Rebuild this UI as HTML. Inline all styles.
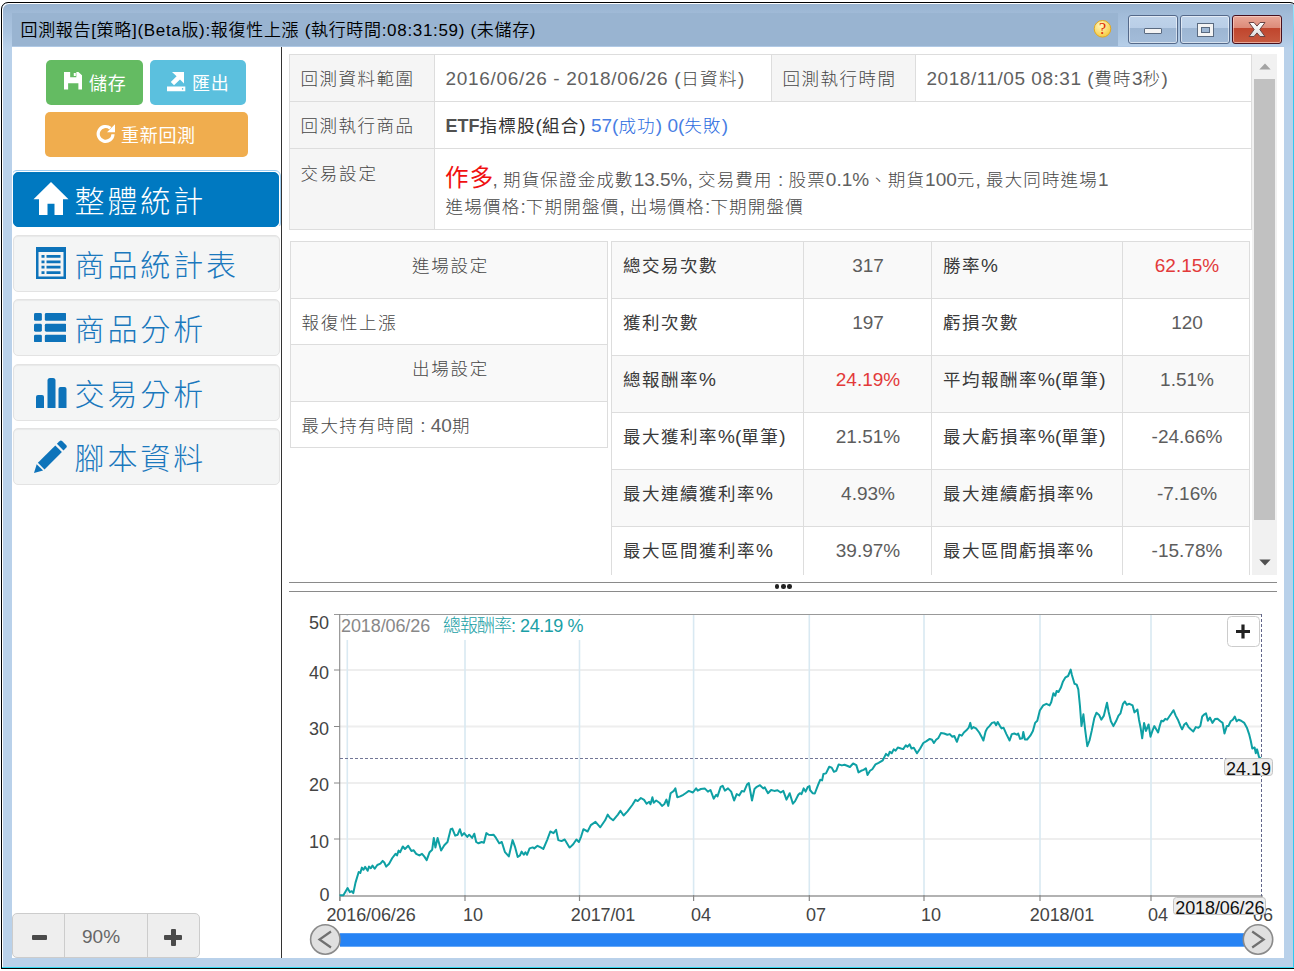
<!DOCTYPE html>
<html lang="zh-Hant">
<head>
<meta charset="utf-8">
<title>回測報告</title>
<style>
*{box-sizing:border-box;margin:0;padding:0}
html,body{width:1294px;height:971px;overflow:hidden;background:#fff}
body{position:relative;font-family:"Liberation Sans","Noto Sans CJK TC",sans-serif;color:#474747;font-size:18px;font-weight:300}
.abs{position:absolute}
#frame{left:1px;top:2px;width:1296px;height:967px;background:linear-gradient(#97b2cf 0,#a2bcd9 12px,#aac4e0 30px,#b9d1ea 46px,#b9d1ea 100%);border:1px solid #000;border-radius:7px 7px 0 0;box-shadow:inset 1px 1px 0 #fff}
#cyanr{left:1293px;top:5px;width:1px;height:963px;background:linear-gradient(#9fe6fa 0,#4fd0f4 40px,#30c8f0 80px)}
#cyanb{left:2px;top:967px;width:1292px;height:1px;background:#30d8f0}
#tpanel{left:12px;top:13px;width:1106px;height:33px;background:#99b4d1}
#tline{left:12px;top:46px;width:1272px;height:1px;background:#b0c9e5}
#title{left:20.5px;top:17px;height:28px;line-height:28px;font-size:17px;color:#000;white-space:nowrap;letter-spacing:.68px;font-weight:350}
#content{left:12px;top:47px;width:1272px;height:911px;background:#fff}
#vline{left:281px;top:47px;width:1px;height:911px;background:#333}
.wb{top:15px;height:29px;border:1px solid #54698a;border-radius:3px;background:linear-gradient(#bfd3ea 0,#b9cee7 45%,#9db6d3 46%,#a3bcd9 100%);box-shadow:inset 0 0 0 1px rgba(255,255,255,.55)}
.wb.close{border-color:#47101e;background:linear-gradient(#eaa898 0,#dc8a78 45%,#c0452d 46%,#c65a40 100%);box-shadow:inset 0 0 0 1px rgba(255,220,210,.6)}
.btn{color:#fff;border-radius:5px;font-size:18px;white-space:nowrap;font-weight:400}
.btn span{position:absolute;top:1.5px;line-height:45px;letter-spacing:.7px}
.menu{left:13px;width:267px;height:57px;background:#f4f5f5;border:1px solid #e3e3e3;border-radius:5px;color:#1a78bd;font-size:30px;white-space:nowrap;box-shadow:inset 0 1px 1px rgba(0,0,0,.05)}
.menu.active{background:#0079c1;border-color:#0079c1;color:#fff}
.menu span{position:absolute;left:60.5px;top:8px;line-height:44px;letter-spacing:2.9px}
.menu svg{position:absolute}
.t{position:absolute;white-space:nowrap;line-height:24px;height:24px;font-size:17.5px;letter-spacing:1px}
.t i{font-style:normal;font-size:19px;letter-spacing:0;line-height:0}
.t i{opacity:.86}
.b i{font-weight:400;font-size:19px;opacity:1}
.n{font-size:19px;letter-spacing:0;opacity:.88}
.cell{position:absolute;border:1px solid #ddd}
.g{background:#f9f9f9}
.g2{background:#f5f5f5}
.b{font-weight:400;color:#3a3a3a}
.c{text-align:center}
.red{color:#e02020}
</style>
</head>
<body>
<div id="frame" class="abs"></div>
<div id="cyanr" class="abs"></div>
<div id="cyanb" class="abs"></div>
<div class="abs" style="left:1px;top:968px;width:1293px;height:1px;background:#000"></div>
<div id="tpanel" class="abs"></div>
<div id="tline" class="abs"></div>
<div id="title" class="abs">回測報告[策略](Beta版):報復性上漲 (執行時間:08:31:59) (未儲存)</div>

<!-- help -->
<svg class="abs" style="left:1092px;top:19px" width="20" height="20" viewBox="0 0 20 20">
<defs><radialGradient id="hg" cx="40%" cy="30%" r="75%"><stop offset="0" stop-color="#fff8c0"/><stop offset="1" stop-color="#f6c83c"/></radialGradient></defs>
<circle cx="10.5" cy="9.8" r="8.3" fill="url(#hg)" stroke="#e2a820" stroke-width="1"/>
<text x="10.5" y="15" font-family="Liberation Serif,serif" font-size="16" fill="#e02800" text-anchor="middle">?</text>
</svg>
<!-- window buttons -->
<div class="abs wb" style="left:1128px;width:50px"><div class="abs" style="left:15px;top:12px;width:18px;height:6px;background:#f4f4f4;border:1px solid #5a6a80;border-radius:1px"></div></div>
<div class="abs wb" style="left:1180px;width:50px"><div class="abs" style="left:17px;top:7.5px;width:14.5px;height:12.5px;border:3.5px solid #f4f4f4;outline:1px solid #5a6a80;box-shadow:inset 0 0 0 1px #5a6a80"></div></div>
<div class="abs wb close" style="left:1232px;width:50px">
<svg class="abs" style="left:14px;top:5px" width="20" height="18" viewBox="0 0 20 18"><defs><linearGradient id="xg" x1="0" y1="0" x2="0" y2="1"><stop offset="0" stop-color="#fff"/><stop offset="1" stop-color="#dcdcdc"/></linearGradient></defs><path d="M2 1.500h5l3 3.600 3-3.600h5L12.800 8.500l5.200 7h-5l-3-3.600-3 3.600H2l5.200-7z" fill="url(#xg)" stroke="#6a4444" stroke-width="1" stroke-linejoin="round"/></svg>
</div>

<div id="content" class="abs"></div>
<div id="vline" class="abs"></div>

<!-- left buttons -->
<div class="abs btn" style="left:46px;top:60px;width:97px;height:45px;background:#64bb62">
<svg class="abs" style="left:17.500px;top:12px" width="18.500" height="17.500" viewBox="0 0 18 17" preserveAspectRatio="none"><path d="M0 0h14l4 3.5V17H14V11H4v6H0zM6 0v5h6V0zM9.5 1h2v3h-2z" fill="#fff" fill-rule="evenodd"/></svg>
<span style="left:43px">儲存</span></div>
<div class="abs btn" style="left:150px;top:60px;width:96px;height:45px;background:#5bc0de">
<svg class="abs" style="left:17px;top:11.800px" width="19" height="20" viewBox="0 0 19 20"><path d="M0 14.500h18.300v4.700H0zM5 0H17V11.500L13 7.600 7 13.200 3.800 10 9.600 4.300z" fill="#fff"/><circle cx="15.600" cy="16.900" r=".8" fill="#5bc0de"/></svg>
<span style="left:42px">匯出</span></div>
<div class="abs btn" style="left:45px;top:112px;width:203px;height:45px;background:#f0ad4e">
<svg class="abs" style="left:51px;top:12px" width="20" height="20" viewBox="0 0 20 20"><path d="M17 10.200a7.400 7.400 0 1 1-2.600-5.900" fill="none" stroke="#fff" stroke-width="3.200"/><path d="M11 8.200L19 .3v7.900z" fill="#fff"/></svg>
<span style="left:76px">重新回測</span></div>

<div class="abs" style="left:11px;top:170px;width:270px;height:59px;border:1px solid #9fcdf0;border-radius:6px;clip-path:inset(0 0 3px 2px)"></div>
<div class="abs menu active" style="top:172px;width:266px;height:55px">
<svg style="left:19px;top:9px" width="36" height="33.500" viewBox="0 0 36 34" preserveAspectRatio="none"><path d="M18 0L35.5 17.5H30V33.5H21.5V22H14.5V33.5H6V17.5H.5z" fill="#fff"/></svg>
<span style="top:7px">整體統計</span></div>
<div class="abs menu" style="top:235px">
<svg style="left:22px;top:10.500px" width="30" height="32" viewBox="0 0 30 32"><path d="M0 0h30v32H0zM2.500 5v24.500h25V5z M5.500 8h3v2.800h-3zM10.500 8h14v2.800h-14zM5.500 13.400h3v2.800h-3zM10.500 13.400h14v2.800h-14zM5.500 18.800h3v2.800h-3zM10.500 18.800h14v2.800h-14zM5.500 24.200h3v2.800h-3zM10.500 24.200h14v2.800h-14z" fill="#0d73ba" fill-rule="evenodd"/></svg>
<span>商品統計表</span></div>
<div class="abs menu" style="top:299px">
<svg style="left:19.500px;top:12.500px" width="32.500" height="29.500" viewBox="0 0 33 30" preserveAspectRatio="none"><g fill="#0d73ba"><rect x="0" y="0" width="8" height="8" rx="1.5"/><rect x="11" y="0" width="22" height="8" rx="1.5"/><rect x="0" y="11" width="8" height="8" rx="1.5"/><rect x="11" y="11" width="22" height="8" rx="1.5"/><rect x="0" y="22" width="8" height="8" rx="1.5"/><rect x="11" y="22" width="22" height="8" rx="1.5"/></g></svg>
<span>商品分析</span></div>
<div class="abs menu" style="top:363.5px">
<svg style="left:22px;top:13px" width="31" height="30" viewBox="0 0 31 30"><g fill="#0d73ba"><path d="M0 30V19a2 2 0 0 1 2-2h4a2 2 0 0 1 2 2v11z"/><path d="M11.5 30V2.500a2.500 2.500 0 0 1 2.500-2.500h3a2.500 2.500 0 0 1 2.500 2.500V30z"/><path d="M22.500 30V11a2 2 0 0 1 2-2h4a2 2 0 0 1 2 2v19z"/></g></svg>
<span>交易分析</span></div>
<div class="abs menu" style="top:428px">
<svg style="left:20px;top:11px" width="34" height="33" viewBox="0 0 34 33"><g fill="#0d73ba"><path d="M25.500 1.200a2 2 0 0 1 2.800 0l3.800 3.800a2 2 0 0 1 0 2.800l-2.600 2.600-6.600-6.600z"/><path d="M21.300 5.400l6.600 6.600L10.500 29.400l-6.600-6.600z"/><path d="M2.700 24.200l6.400 6.400L0 33z"/></g></svg>
<span>腳本資料</span></div>

<!-- zoom control -->
<div class="abs" style="left:12px;top:913px;width:188px;height:45px;background:#eee;border:1px solid #ccc;border-radius:5px"></div>
<div class="abs" style="left:64px;top:913px;width:1px;height:45px;background:#ccc"></div>
<div class="abs" style="left:147px;top:913px;width:1px;height:45px;background:#ccc"></div>
<div class="abs" style="left:32px;top:935px;width:15px;height:5px;background:#4a4a4a;border-radius:1px"></div>
<div class="abs" style="left:164px;top:935px;width:18px;height:5px;background:#4a4a4a;border-radius:1px"></div>
<div class="abs" style="left:170.5px;top:929px;width:5px;height:17px;background:#4a4a4a;border-radius:1px"></div>
<div class="t" style="left:82px;top:925px;font-size:19px;color:#666;letter-spacing:0">90%</div>

<!-- info table -->
<div class="cell g2" style="left:289px;top:54px;width:146px;height:48px"></div>
<div class="cell" style="left:434px;top:54px;width:338px;height:48px"></div>
<div class="cell g2" style="left:771px;top:54px;width:145px;height:48px"></div>
<div class="cell" style="left:915px;top:54px;width:337px;height:48px"></div>
<div class="cell g2" style="left:289px;top:101px;width:146px;height:48px"></div>
<div class="cell" style="left:434px;top:101px;width:818px;height:48px"></div>
<div class="cell g2" style="left:289px;top:148px;width:146px;height:82px"></div>
<div class="cell" style="left:434px;top:148px;width:818px;height:82px"></div>
<div class="t" id="a1" style="left:300.5px;top:67px;letter-spacing:1.5px">回測資料範圍</div>
<div class="t" id="a2" style="left:445.5px;top:67px;letter-spacing:1.4px"><i style="letter-spacing:.68px">2016/06/26 - 2018/06/26 (</i>日資料<i>)</i></div>
<div class="t" id="a3" style="left:782.5px;top:67px;letter-spacing:1.5px">回測執行時間</div>
<div class="t" id="a4" style="left:926.5px;top:67px;letter-spacing:1.4px"><i style="letter-spacing:.53px">2018/11/05 08:31 (</i>費時<i>3</i>秒<i>)</i></div>
<div class="t" id="a5" style="left:300.5px;top:114px;letter-spacing:1.5px">回測執行商品</div>
<div class="t" id="a6" style="left:445.5px;top:114px;letter-spacing:1.2px"><span class="b" style="color:#333"><i style="font-weight:700;font-size:18px;opacity:.85">ETF</i>指標股<i>(</i>組合<i>)</i></span><i> </i><span style="color:#2a6ae0"><i>57(</i>成功<i>) 0(</i>失敗<i>)</i></span></div>
<div class="t" id="a7" style="left:300.5px;top:161.5px;letter-spacing:1.8px">交易設定</div>
<div class="t b" id="a8b" style="left:445px;top:164px;line-height:28px;height:28px;color:#f01010;font-size:23.5px;letter-spacing:1.2px">作多</div>
<div class="t" id="a8" style="left:492.5px;top:168px;letter-spacing:1.15px"><i>, </i>期貨保證金成數<i>13.5%, </i>交易費用<i> : </i>股票<i>0.1%</i>、期貨<i>100</i>元<i>, </i>最大同時進場<i>1</i></div>
<div class="t" id="a9" style="left:445.5px;top:195px;letter-spacing:1.25px">進場價格<i>:</i>下期開盤價<i>, </i>出場價格<i>:</i>下期開盤價</div>

<!-- settings table -->
<div class="cell g" style="left:290px;top:241px;width:318px;height:58px"></div>
<div class="cell" style="left:290px;top:298px;width:318px;height:47px"></div>
<div class="cell g" style="left:290px;top:344px;width:318px;height:58px"></div>
<div class="cell" style="left:290px;top:401px;width:318px;height:47px"></div>
<div class="t c" style="left:291px;width:319px;top:254px;letter-spacing:1.8px">進場設定</div>
<div class="t" style="left:301.5px;top:311px;letter-spacing:1.7px">報復性上漲</div>
<div class="t c" style="left:291px;width:319px;top:356.5px;letter-spacing:1.8px">出場設定</div>
<div class="t" style="left:301.5px;top:414px;letter-spacing:1.4px">最大持有時間<i> : 40</i>期</div>

<!-- stats table -->
<div class="cell g" style="left:611px;top:241px;width:193px;height:58px"></div>
<div class="cell g" style="left:803px;top:241px;width:129px;height:58px"></div>
<div class="cell g" style="left:931px;top:241px;width:192px;height:58px"></div>
<div class="cell g" style="left:1122px;top:241px;width:128px;height:58px"></div>
<div class="t b" style="left:623px;top:254px;letter-spacing:1.5px">總交易次數</div>
<div class="t c n " style="left:803.5px;width:129px;top:254px">317</div>
<div class="t b" style="left:943px;top:254px;letter-spacing:1.5px">勝率<i>%</i></div>
<div class="t c n red" style="left:1122.5px;width:129px;top:254px">62.15%</div>
<div class="cell" style="left:611px;top:298px;width:193px;height:58px"></div>
<div class="cell" style="left:803px;top:298px;width:129px;height:58px"></div>
<div class="cell" style="left:931px;top:298px;width:192px;height:58px"></div>
<div class="cell" style="left:1122px;top:298px;width:128px;height:58px"></div>
<div class="t b" style="left:623px;top:311px;letter-spacing:1.5px">獲利次數</div>
<div class="t c n " style="left:803.5px;width:129px;top:311px">197</div>
<div class="t b" style="left:943px;top:311px;letter-spacing:1.5px">虧損次數</div>
<div class="t c n " style="left:1122.5px;width:129px;top:311px">120</div>
<div class="cell g" style="left:611px;top:355px;width:193px;height:58px"></div>
<div class="cell g" style="left:803px;top:355px;width:129px;height:58px"></div>
<div class="cell g" style="left:931px;top:355px;width:192px;height:58px"></div>
<div class="cell g" style="left:1122px;top:355px;width:128px;height:58px"></div>
<div class="t b" style="left:623px;top:368px;letter-spacing:1.5px">總報酬率<i>%</i></div>
<div class="t c n red" style="left:803.5px;width:129px;top:368px">24.19%</div>
<div class="t b" style="left:943px;top:368px;letter-spacing:1.5px">平均報酬率<i>%(</i>單筆<i>)</i></div>
<div class="t c n " style="left:1122.5px;width:129px;top:368px">1.51%</div>
<div class="cell" style="left:611px;top:412px;width:193px;height:58px"></div>
<div class="cell" style="left:803px;top:412px;width:129px;height:58px"></div>
<div class="cell" style="left:931px;top:412px;width:192px;height:58px"></div>
<div class="cell" style="left:1122px;top:412px;width:128px;height:58px"></div>
<div class="t b" style="left:623px;top:425px;letter-spacing:1.5px">最大獲利率<i>%(</i>單筆<i>)</i></div>
<div class="t c n " style="left:803.5px;width:129px;top:425px">21.51%</div>
<div class="t b" style="left:943px;top:425px;letter-spacing:1.5px">最大虧損率<i>%(</i>單筆<i>)</i></div>
<div class="t c n " style="left:1122.5px;width:129px;top:425px">-24.66%</div>
<div class="cell g" style="left:611px;top:469px;width:193px;height:58px"></div>
<div class="cell g" style="left:803px;top:469px;width:129px;height:58px"></div>
<div class="cell g" style="left:931px;top:469px;width:192px;height:58px"></div>
<div class="cell g" style="left:1122px;top:469px;width:128px;height:58px"></div>
<div class="t b" style="left:623px;top:482px;letter-spacing:1.5px">最大連續獲利率<i>%</i></div>
<div class="t c n " style="left:803.5px;width:129px;top:482px">4.93%</div>
<div class="t b" style="left:943px;top:482px;letter-spacing:1.5px">最大連續虧損率<i>%</i></div>
<div class="t c n " style="left:1122.5px;width:129px;top:482px">-7.16%</div>
<div class="cell" style="left:611px;top:526px;width:193px;height:49px;border-bottom:0"></div>
<div class="cell" style="left:803px;top:526px;width:129px;height:49px;border-bottom:0"></div>
<div class="cell" style="left:931px;top:526px;width:192px;height:49px;border-bottom:0"></div>
<div class="cell" style="left:1122px;top:526px;width:128px;height:49px;border-bottom:0"></div>
<div class="t b" style="left:623px;top:539px;letter-spacing:1.5px">最大區間獲利率<i>%</i></div>
<div class="t c n " style="left:803.5px;width:129px;top:539px">39.97%</div>
<div class="t b" style="left:943px;top:539px;letter-spacing:1.5px">最大區間虧損率<i>%</i></div>
<div class="t c n " style="left:1122.5px;width:129px;top:539px">-15.78%</div>

<!-- scrollbar -->
<div class="abs" style="left:1252px;top:54px;width:25px;height:521px;background:#f1f1f1"></div>
<div class="abs" style="left:1254px;top:79px;width:21px;height:441px;background:#c1c1c1"></div>
<svg class="abs" style="left:1258.500px;top:62.800px" width="12" height="7" viewBox="0 0 13 8"><path d="M0 7.500L6.500 .5 13 7.500z" fill="#a3a3a3"/></svg>
<svg class="abs" style="left:1258.500px;top:558.500px" width="12" height="7" viewBox="0 0 13 8"><path d="M0 .5L6.500 7.500 13 .5z" fill="#505050"/></svg>

<!-- splitter -->
<div class="abs" style="left:289px;top:582px;width:988px;height:1px;background:#8a8a8a"></div>
<div class="abs" style="left:289px;top:591px;width:988px;height:1px;background:#8a8a8a"></div>
<div class="abs" style="left:774.700px;top:584.200px;width:4.600px;height:4.600px;border-radius:2.300px;background:#222"></div>
<div class="abs" style="left:781px;top:584.200px;width:4.600px;height:4.600px;border-radius:2.300px;background:#222"></div>
<div class="abs" style="left:787.300px;top:584.200px;width:4.600px;height:4.600px;border-radius:2.300px;background:#222"></div>

<!-- chart -->
<svg class="abs" style="left:282px;top:596px" width="1002" height="362" viewBox="282 596 1002 362" font-family="Liberation Sans, sans-serif">
<g stroke="#eeeeee" stroke-width="2">
<line x1="340" x2="1262" y1="670" y2="670"/><line x1="340" x2="1262" y1="726.500" y2="726.500"/><line x1="340" x2="1262" y1="783" y2="783"/><line x1="340" x2="1262" y1="839" y2="839"/>
</g>
<g stroke="#d9e9f2" stroke-width="1.600">
<line x1="347.3" x2="347.3" y1="615" y2="895"/>
<line x1="465" x2="465" y1="615" y2="895"/>
<line x1="579.5" x2="579.5" y1="615" y2="895"/>
<line x1="693.6" x2="693.6" y1="615" y2="895"/>
<line x1="809.3" x2="809.3" y1="615" y2="895"/>
<line x1="924" x2="924" y1="615" y2="895"/>
<line x1="1040" x2="1040" y1="615" y2="895"/>
<line x1="1151" x2="1151" y1="615" y2="895"/>
</g>
<rect x="341" y="616" width="250" height="24" fill="#fff"/>
<line x1="334" x2="1262" y1="614.500" y2="614.500" stroke="#999" stroke-width="1"/>
<line x1="339.700" x2="339.700" y1="614" y2="901" stroke="#8a8a8a" stroke-width="1.100"/>
<line x1="339" x2="1262" y1="895.900" y2="895.900" stroke="#b2b2b2" stroke-width="2"/>
<g stroke="#888" stroke-width="1">
<line x1="334" x2="340" y1="670" y2="670"/><line x1="334" x2="340" y1="726.500" y2="726.500"/><line x1="334" x2="340" y1="783" y2="783"/><line x1="334" x2="340" y1="839" y2="839"/>
</g>
<g stroke="#888" stroke-width="1.200">
<line x1="340" x2="340" y1="895" y2="901"/>
<line x1="465" x2="465" y1="895" y2="901"/>
<line x1="579.5" x2="579.5" y1="895" y2="901"/>
<line x1="693.6" x2="693.6" y1="895" y2="901"/>
<line x1="809.3" x2="809.3" y1="895" y2="901"/>
<line x1="924" x2="924" y1="895" y2="901"/>
<line x1="1040" x2="1040" y1="895" y2="901"/>
<line x1="1151" x2="1151" y1="895" y2="901"/>
<line x1="1262" x2="1262" y1="895" y2="901"/>
</g>
<line x1="340" x2="1262" y1="758.500" y2="758.500" stroke="#62668a" stroke-width=".900" stroke-dasharray="3 2"/>
<line x1="1261.500" x2="1261.500" y1="614" y2="896" stroke="#62668a" stroke-width="1" stroke-dasharray="3 2"/>
<polyline fill="none" stroke="#0ea0a4" stroke-width="2" stroke-linejoin="round" points="339.6,895.3 343.4,895.3 347.6,888.0 349.8,892.1 351.7,891.2 353.3,893.1 355.5,882.6 358.7,872.0 360.3,873.0 361.9,867.6 363.5,869.8 365.1,866.9 367.7,870.8 369.0,866.6 370.9,868.2 372.5,865.6 374.7,868.8 377.3,865.0 380.4,863.7 382.7,860.9 384.3,862.5 386.2,866.6 389.1,863.7 392.3,858.0 395.5,853.8 397.0,855.4 398.6,850.6 400.2,852.2 402.8,846.5 405.0,849.0 408.2,845.8 411.4,851.0 413.7,850.3 416.2,853.8 419.4,855.4 422.0,853.8 424.2,856.4 426.7,860.2 429.6,852.2 432.2,849.7 433.8,837.9 435.4,847.4 437.6,837.9 441.1,850.6 444.3,845.2 447.5,842.0 450.7,829.2 452.3,828.6 455.2,835.6 457.7,834.7 459.9,829.2 461.9,835.6 464.1,833.1 467.3,836.9 469.2,834.7 472.1,837.9 474.3,833.7 476.2,842.0 478.5,843.3 481.7,842.0 483.9,842.7 486.4,833.1 488.7,834.7 491.2,835.0 493.5,834.7 496.0,837.9 499.2,843.3 501.8,842.0 505.0,852.2 508.8,856.4 512.6,840.1 515.2,847.4 517.7,857.0 520.0,855.4 521.6,851.6 523.8,854.8 525.4,852.2 527.0,854.8 529.6,848.4 532.7,847.4 534.3,848.4 537.5,845.8 540.7,847.4 543.3,849.0 547.1,840.1 550.3,831.5 553.5,833.1 556.1,829.9 558.3,840.1 561.5,841.1 564.7,839.5 569.5,847.4 570.0,847.4 573.2,844.3 576.4,839.5 578.9,842.0 581.2,836.3 583.4,829.2 587.6,831.5 590.8,825.1 595.5,821.9 600.3,827.3 605.1,820.3 607.7,814.6 609.9,817.8 613.1,820.3 617.9,814.6 620.4,810.7 623.6,815.5 627.5,811.4 632.3,805.0 635.5,799.9 637.7,801.1 640.9,798.0 644.1,799.9 646.6,803.7 649.2,801.8 650.5,804.3 652.4,797.3 653.7,802.7 656.2,800.5 659.4,802.7 662.0,805.9 664.2,804.3 666.4,799.6 668.3,805.9 670.6,793.2 673.8,790.9 675.4,788.4 677.3,797.3 680.2,796.4 683.3,794.8 685.6,793.2 688.8,790.9 692.9,792.5 696.1,788.4 697.7,790.6 700.9,789.0 704.7,788.4 707.9,791.6 710.5,790.0 713.7,798.6 716.2,794.8 717.5,796.4 720.7,786.8 722.6,785.8 724.9,790.6 728.0,788.4 731.2,791.6 734.1,800.5 736.7,794.1 739.2,795.4 741.8,790.9 744.0,791.6 747.2,784.2 748.8,783.0 752.0,800.5 754.5,789.0 756.8,786.8 760.0,785.2 763.2,788.4 764.8,787.4 768.0,793.2 771.1,790.0 774.3,790.9 777.5,790.3 780.7,792.5 783.3,790.9 786.5,799.6 789.7,793.2 792.9,803.7 795.1,801.1 798.3,794.8 799.9,793.2 801.5,794.1 803.7,788.4 805.6,791.6 807.9,786.8 809.5,786.1 810.0,790.0 812.6,793.2 814.8,793.5 818.0,785.2 820.2,779.8 822.1,780.4 823.4,774.0 826.0,773.4 829.2,766.7 831.7,767.6 833.9,771.8 836.2,770.8 838.7,764.4 841.9,765.4 844.5,764.8 847.7,766.0 849.9,767.0 853.1,763.5 856.3,765.1 858.5,772.4 861.1,770.8 863.6,769.9 865.9,768.3 867.5,775.0 870.0,770.8 872.3,769.2 875.5,764.4 878.6,762.8 882.8,760.3 886.0,753.9 888.2,755.8 889.8,751.7 891.7,753.3 893.7,749.4 895.6,750.7 897.8,747.5 901.0,748.5 903.2,749.1 905.8,745.3 907.4,746.9 909.6,744.3 911.5,748.5 913.8,747.8 917.0,753.3 920.2,748.5 923.3,743.0 926.5,741.1 929.7,738.9 932.0,739.8 933.9,743.0 936.1,739.8 938.4,737.9 940.9,733.1 944.1,733.5 947.3,734.7 949.8,734.1 952.1,736.7 954.3,736.0 956.9,741.8 959.4,734.7 961.7,735.7 963.9,732.5 966.4,730.3 968.7,727.7 970.3,722.9 971.6,728.7 973.5,727.1 976.0,728.4 979.2,732.5 981.8,737.3 983.4,740.5 985.6,731.5 987.2,728.4 989.4,726.1 992.0,722.9 994.5,722.3 996.1,725.2 997.7,722.0 1000.0,726.1 1001.6,728.4 1003.5,727.7 1006.4,734.1 1009.6,740.5 1011.8,734.1 1014.3,733.5 1016.9,734.7 1018.2,733.5 1020.1,738.9 1022.3,738.3 1023.3,731.9 1024.9,739.5 1027.1,739.5 1030.3,735.7 1032.9,730.9 1035.1,722.9 1037.3,720.7 1039.9,710.2 1040.0,710.2 1043.2,705.4 1046.4,703.8 1049.6,705.4 1051.2,702.2 1053.4,693.2 1055.3,695.8 1056.6,691.0 1058.5,692.0 1060.8,687.8 1063.0,681.4 1065.5,677.3 1068.1,676.0 1070.7,669.6 1071.9,675.0 1074.5,683.7 1076.7,684.6 1078.3,689.4 1079.9,705.4 1081.5,726.1 1083.4,714.3 1085.3,730.9 1087.3,746.2 1089.5,740.5 1091.7,730.9 1094.3,718.1 1096.5,712.7 1099.1,714.9 1101.3,719.7 1103.9,715.6 1107.0,702.8 1108.6,711.7 1110.9,721.3 1113.4,726.1 1116.0,721.3 1118.5,715.6 1120.5,713.3 1123.0,703.8 1124.9,701.5 1126.8,704.7 1129.4,703.8 1132.6,705.4 1134.5,712.4 1137.4,709.5 1139.0,719.7 1140.6,727.7 1142.2,738.3 1144.1,722.9 1146.0,730.9 1148.6,724.5 1150.5,736.7 1152.4,730.9 1154.3,726.1 1156.2,729.3 1158.1,732.5 1159.7,726.1 1161.3,720.7 1163.2,721.3 1165.2,718.8 1167.1,719.7 1169.3,716.5 1171.5,713.3 1173.5,710.2 1175.7,715.6 1177.9,719.7 1180.5,726.1 1182.1,729.3 1184.3,724.5 1186.2,722.9 1188.5,727.1 1190.7,729.3 1193.3,731.5 1195.8,727.1 1198.4,727.7 1200.3,726.1 1202.2,716.5 1204.4,714.3 1206.0,713.3 1207.9,720.7 1209.9,717.5 1212.4,722.9 1215.0,719.1 1217.5,718.8 1220.4,721.3 1222.6,722.9 1224.5,733.5 1226.8,726.1 1228.4,726.1 1230.6,721.3 1232.8,719.7 1234.8,716.5 1236.7,721.3 1238.6,719.7 1241.1,720.7 1244.3,722.9 1246.9,727.7 1249.1,734.1 1250.7,740.5 1252.3,748.5 1254.6,747.5 1255.8,753.3 1257.1,749.4 1259.0,757.1 1261.3,759.0"/>
<g font-size="18" fill="#444" text-anchor="end">
<text x="329" y="628.700">50</text><text x="329" y="679">40</text><text x="329" y="735">30</text><text x="329" y="791">20</text><text x="329" y="847.500">10</text><text x="329.500" y="901">0</text>
</g>
<g font-size="18" fill="#444" text-anchor="middle" letter-spacing="-.1">
<text x="371" y="921">2016/06/26</text><text x="473" y="921">10</text><text x="603" y="921">2017/01</text><text x="701" y="921">04</text><text x="816" y="921">07</text><text x="931" y="921">10</text><text x="1062" y="921">2018/01</text><text x="1158" y="921">04</text><text x="1263" y="921">06</text>
</g>
<text x="341" y="632.300" font-size="18" fill="#888" letter-spacing="-.1">2018/06/26</text>
<text x="443" y="632.300" font-size="18" fill="#1aa0a6" font-family="Liberation Sans, Noto Sans CJK TC, sans-serif"><tspan letter-spacing="-1">總報酬率</tspan><tspan letter-spacing="-.45">: 24.19 %</tspan></text>
<rect x="1227.500" y="616.500" width="32" height="30" rx="4" fill="#fff" stroke="#ccc"/>
<path d="M1236 631.500h14M1243 624.500v14" stroke="#222" stroke-width="3.200"/>
<rect x="1224.500" y="758.500" width="48" height="17" rx="3" fill="#eee" stroke="#c4c4c4"/>
<text x="1248.500" y="774.500" font-size="18" fill="#111" text-anchor="middle">24.19</text>
<rect x="1173.500" y="897.500" width="92" height="17" rx="3" fill="#eee" stroke="#c4c4c4"/>
<text x="1219.800" y="913.500" font-size="18" letter-spacing="-.1" fill="#111" text-anchor="middle">2018/06/26</text>
<rect x="340" y="933.200" width="905" height="13.500" fill="#2683f4"/>
<circle cx="325.300" cy="939.500" r="14.700" fill="#e0e0e0" stroke="#8a8a8a" stroke-width="1.600"/>
<path d="M331 931.500l-11.500 8 11.500 8" fill="none" stroke="#707070" stroke-width="2.200"/>
<circle cx="1258" cy="939.500" r="14.700" fill="#e0e0e0" stroke="#8a8a8a" stroke-width="1.600"/>
<path d="M1252.200 931.500l11.500 8-11.500 8" fill="none" stroke="#707070" stroke-width="2.200"/>
</svg>
</body>
</html>
